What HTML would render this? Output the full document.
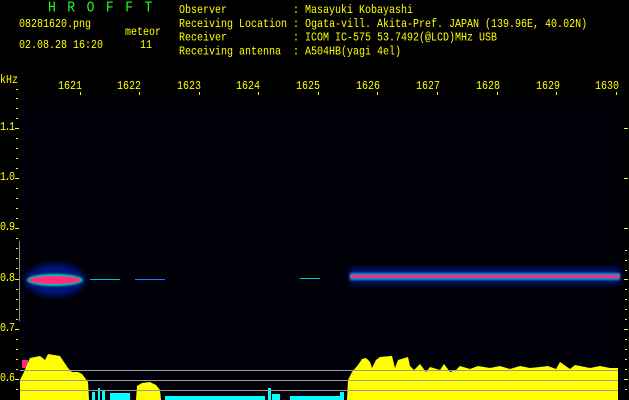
<!DOCTYPE html>
<html><head><meta charset="utf-8"><style>
html,body{margin:0;padding:0;background:#000;width:629px;height:400px;overflow:hidden}
.t{position:absolute;font-family:"Liberation Mono",monospace;font-size:10px;color:#ff0;white-space:pre;line-height:12px;transform:scaleY(1.15);transform-origin:0 0}
.y{letter-spacing:-1.5px}
</style></head><body>
<svg width="629" height="400" style="position:absolute;left:0;top:0">
<defs>
<filter id="b1"><feGaussianBlur stdDeviation="3"/></filter>
<filter id="b2"><feGaussianBlur stdDeviation="1"/></filter>
</defs>
<rect x="20" y="97" width="602" height="303" fill="#000008"/>
<g fill="#ff0">
<rect x="15" y="128" width="4" height="1"/><rect x="15" y="178" width="4" height="1"/><rect x="15" y="228" width="4" height="1"/><rect x="15" y="279" width="4" height="1"/><rect x="15" y="329" width="4" height="1"/><rect x="15" y="379" width="4" height="1"/>
</g>
<g fill="#ff0">
<rect x="16" y="98" width="2" height="1"/><rect x="16" y="108" width="2" height="1"/><rect x="16" y="118" width="2" height="1"/><rect x="16" y="138" width="2" height="1"/><rect x="16" y="148" width="2" height="1"/><rect x="16" y="158" width="2" height="1"/><rect x="16" y="168" width="2" height="1"/><rect x="16" y="188" width="2" height="1"/><rect x="16" y="198" width="2" height="1"/><rect x="16" y="208" width="2" height="1"/><rect x="16" y="218" width="2" height="1"/><rect x="16" y="238" width="2" height="1"/><rect x="16" y="248" width="2" height="1"/><rect x="16" y="258" width="2" height="1"/><rect x="16" y="268" width="2" height="1"/><rect x="16" y="289" width="2" height="1"/><rect x="16" y="299" width="2" height="1"/><rect x="16" y="309" width="2" height="1"/><rect x="16" y="319" width="2" height="1"/><rect x="16" y="339" width="2" height="1"/><rect x="16" y="349" width="2" height="1"/><rect x="16" y="359" width="2" height="1"/><rect x="16" y="369" width="2" height="1"/><rect x="16" y="389" width="2" height="1"/>
</g>
<rect x="19" y="241" width="1" height="80" fill="#888"/>
<g fill="#ff0">
<rect x="624" y="128" width="4" height="1"/><rect x="624" y="178" width="4" height="1"/><rect x="624" y="228" width="4" height="1"/><rect x="624" y="279" width="4" height="1"/><rect x="624" y="329" width="4" height="1"/><rect x="624" y="379" width="4" height="1"/>
<rect x="625" y="250" width="2" height="1"/><rect x="625" y="260" width="2" height="1"/><rect x="625" y="270" width="2" height="1"/><rect x="625" y="289" width="2" height="1"/><rect x="625" y="299" width="2" height="1"/><rect x="625" y="309" width="2" height="1"/><rect x="625" y="319" width="2" height="1"/><rect x="625" y="339" width="2" height="1"/><rect x="625" y="349" width="2" height="1"/><rect x="625" y="359" width="2" height="1"/><rect x="625" y="369" width="2" height="1"/><rect x="625" y="389" width="2" height="1"/>
</g>
<g fill="#ff0">
<rect x="80" y="92" width="1" height="3"/><rect x="139" y="92" width="1" height="3"/><rect x="199" y="92" width="1" height="3"/><rect x="258" y="92" width="1" height="3"/><rect x="318" y="92" width="1" height="3"/><rect x="377" y="92" width="1" height="3"/><rect x="437" y="92" width="1" height="3"/><rect x="497" y="92" width="1" height="3"/><rect x="556" y="92" width="1" height="3"/><rect x="616" y="92" width="1" height="3"/><rect x="16" y="89" width="2" height="1"/>
</g>
<g filter="url(#b1)" opacity="0.6">
<ellipse cx="55" cy="280" rx="30" ry="16" fill="#0020d0"/>
<rect x="350" y="268" width="270" height="16" fill="#0020c0"/>
</g>
<g filter="url(#b2)">
<ellipse cx="55" cy="280" rx="28" ry="6" fill="#00e0a0"/>
<rect x="350" y="273" width="270" height="7" fill="#10a0d0"/>
</g>
<ellipse cx="55" cy="280" rx="26" ry="4" fill="#ff2a80"/>
<rect x="350" y="275" width="270" height="3" fill="#ff2a80"/>
<rect x="90" y="279" width="30" height="1" fill="#0bd"/>
<rect x="135" y="279" width="30" height="1" fill="#1080ff"/>
<rect x="300" y="278" width="20" height="1" fill="#0cd"/>
<rect x="22" y="360" width="6" height="8" fill="#ff2a80"/>
<g fill="#0ff">
<rect x="92" y="392" width="3" height="8"/><rect x="98" y="388" width="2" height="12"/><rect x="102" y="391" width="3" height="9"/><rect x="110" y="393" width="20" height="7"/><rect x="165" y="396" width="100" height="4"/><rect x="268" y="388" width="3" height="12"/><rect x="272" y="394" width="8" height="6"/><rect x="290" y="396" width="50" height="4"/><rect x="340" y="392" width="4" height="8"/>
</g>
<polygon fill="#ff0" points="20,400 20,380 24,372 30,358 40,356 45,360 48,354 60,356 64,362 68,368 72,372 78,372 82,374 88,382 89,400"/>
<polygon fill="#ff0" points="136,400 137,386 142,383 150,382 156,385 160,390 161,400"/>
<polygon fill="#ff0" points="347,400 348,380 352,372 358,365 362,359 366,358 370,362 372,368 376,360 380,357 392,356 395,368 398,360 408,357 410,366 414,370 416,368 420,364 426,372 430,367 440,370 444,364 450,372 456,370 460,366 470,369 478,366 490,368 500,366 510,369 520,366 530,368 540,367 548,366 556,369 560,362 570,369 575,365 590,368 600,366 610,368 618,368 618,400"/>
<g stroke="#9a9a9a" stroke-width="1">
<line x1="20" y1="370.5" x2="618" y2="370.5"/><line x1="20" y1="380.5" x2="618" y2="380.5"/><line x1="20" y1="390.5" x2="618" y2="390.5"/>
</g>
</svg>
<div class="t" style="left:48px;top:1px;color:#2f2;font-size:13px;letter-spacing:11.5px">HROFFT</div>
<div class="t" style="left:19px;top:19px">08281620.png</div>
<div class="t" style="left:125px;top:27px">meteor</div>
<div class="t" style="left:19px;top:40px">02.08.28 16:20</div>
<div class="t" style="left:140px;top:40px">11</div>
<div class="t" style="left:179px;top:5px">Observer           : Masayuki Kobayashi
Receiving Location : Ogata-vill. Akita-Pref. JAPAN (139.96E, 40.02N)
Receiver           : ICOM IC-575 53.7492(@LCD)MHz USB
Receiving antenna  : A504HB(yagi 4el)</div>
<div class="t" style="left:0px;top:75px">kHz</div>
<div class="t" style="left:58px;top:81px">1621</div>
<div class="t" style="left:117px;top:81px">1622</div>
<div class="t" style="left:177px;top:81px">1623</div>
<div class="t" style="left:236px;top:81px">1624</div>
<div class="t" style="left:296px;top:81px">1625</div>
<div class="t" style="left:356px;top:81px">1626</div>
<div class="t" style="left:416px;top:81px">1627</div>
<div class="t" style="left:476px;top:81px">1628</div>
<div class="t" style="left:536px;top:81px">1629</div>
<div class="t" style="left:595px;top:81px">1630</div>
<div class="t y" style="left:0px;top:122px">1.1</div>
<div class="t y" style="left:0px;top:172px">1.0</div>
<div class="t y" style="left:0px;top:222px">0.9</div>
<div class="t y" style="left:0px;top:273px">0.8</div>
<div class="t y" style="left:0px;top:323px">0.7</div>
<div class="t y" style="left:0px;top:373px">0.6</div>
</body></html>
